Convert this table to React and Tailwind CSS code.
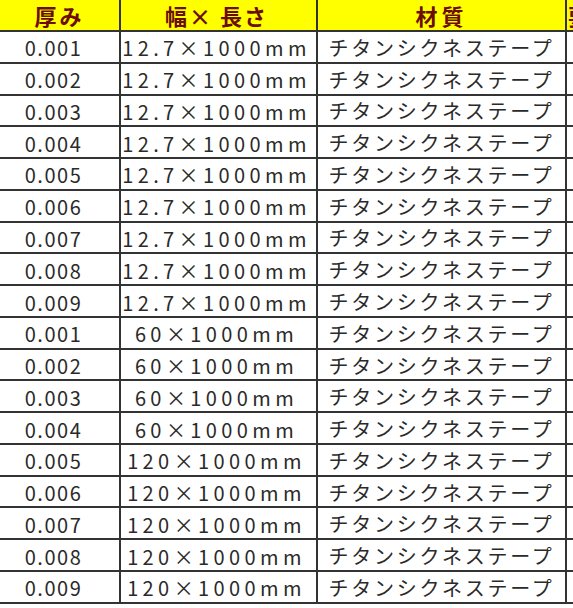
import React from 'react';

const WIDTHS = ['12.7', '12.7', '12.7', '12.7', '12.7', '12.7', '12.7', '12.7', '12.7', '60', '60', '60', '60', '120', '120', '120', '120', '120'];
const THICK = ['0.001', '0.002', '0.003', '0.004', '0.005', '0.006', '0.007', '0.008', '0.009', '0.001', '0.002', '0.003', '0.004', '0.005', '0.006', '0.007', '0.008', '0.009'];

const rows = THICK.map((t, i) => ({ thick: t, width: WIDTHS[i] }));

const cell = 'border-r-2 border-b-2 border-[#333] flex items-center justify-center overflow-hidden whitespace-nowrap';

export default function App() {
  return (
    <div className="w-[573px] h-[608px] overflow-hidden bg-white text-[#2a2a2a]" style={{ fontFamily: '"Noto Sans CJK JP", "Noto Sans", sans-serif' }}>
      <div className="grid grid-cols-[121px_197px_249px_80px] w-[647px]">
        {/* header */}
        <div className={`${cell} h-[32px] bg-[#ffff00] text-[#6b0d00] font-bold text-[22px] tracking-[3px]`}>厚み</div>
        <div className={`${cell} h-[32px] bg-[#ffff00] text-[#6b0d00] font-bold text-[22px] tracking-[2px] pr-[4px]`}>幅× 長さ</div>
        <div className={`${cell} h-[32px] bg-[#ffff00] text-[#6b0d00] font-bold text-[22px] tracking-[4px]`}>材質</div>
        <div className={`${cell} h-[32px] bg-[#ffff00] text-[#6b0d00] font-bold text-[22px] !justify-start pl-[1px]`}>要</div>

        {rows.map((r, i) => (
          <React.Fragment key={i}>
            <div className={`${cell} h-[31.78px] text-[20px] tracking-[1.5px] pr-[12px] pt-[3px]`}>{r.thick}</div>
            <div className={`${cell} h-[31.78px] text-[20px] tracking-[4.4px] pr-[4px] pt-[3px]`}>{r.width}×1000mm</div>
            <div className={`${cell} h-[31.78px] text-[20px] tracking-[2.7px] pt-[2px]`}>チタンシクネステープ</div>
            <div className={`${cell} h-[31.78px]`}></div>
          </React.Fragment>
        ))}
      </div>
    </div>
  );
}
